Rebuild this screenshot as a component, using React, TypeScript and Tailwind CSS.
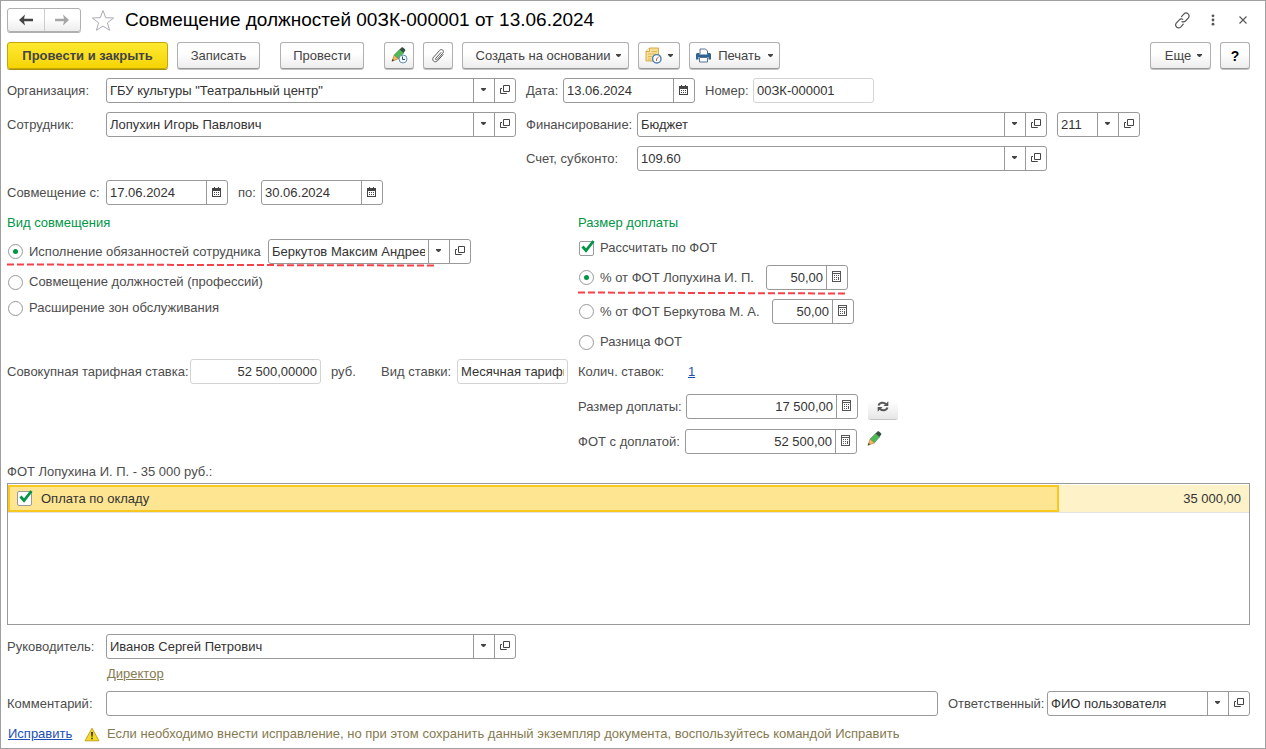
import { useState, type ReactNode } from 'react'
import clsx from 'clsx'

/* ---------- icons ---------- */

const CaretIcon = () => (
  <svg width="5" height="3" viewBox="0 0 5 3" className="shrink-0">
    <path d="M0 0h5v1L3 3H2L0 1z" fill="#444" />
  </svg>
)

const OpenIcon = () => (
  <svg width="10" height="10" viewBox="0 0 10 10" fill="none" stroke="#444">
    <path d="M3.500.5h6v6h-6z" />
    <path d="M2 3.500H.5v5h6V8" />
  </svg>
)

const CalendarIcon = () => (
  <svg width="9" height="10" viewBox="0 0 9 10">
    <path d="M0 1h9v9H0z" fill="#444" />
    <path d="M1 4h7v5H1z" fill="#fff" />
    <path d="M2 0h1v2H2zM6 0h1v2H6z" fill="#444" />
    <path d="M2 5h1v1H2zM4 5h1v1H4zM6 5h1v1H6zM2 7h1v1H2zM4 7h1v1H4zM6 7h1v1H6z" fill="#444" />
  </svg>
)

const CalcIcon = () => (
  <svg width="9" height="11" viewBox="0 0 9 11">
    <path d="M0 0h9v11H0z" fill="#555" />
    <path d="M1 1h7v1H1zM1 3h7v7H1z" fill="#fff" />
    <path d="M2 4h1v1H2zM4 4h1v1H4zM6 4h1v1H6zM2 6h1v1H2zM4 6h1v1H4zM6 6h1v3H6zM2 8h1v1H2zM4 8h1v1H4z" fill="#555" />
  </svg>
)

const ArrowIcon = ({ color, flip }: { color: string; flip?: boolean }) => (
  <svg width="14" height="12" viewBox="0 0 14 12" className={clsx(flip && 'rotate-180')}>
    <path d="M6 .5 0 6l6 5.500L5 7.200h9V4.800H5z" fill={color} />
  </svg>
)

const StarIcon = () => (
  <svg width="24" height="23" viewBox="0 0 24 23" fill="#fff" stroke="#a9adb5">
    <path d="M12 1.500l2.700 7.200 8 .3-6.300 4.800 2.200 7.500L12 17l-6.600 4.300 2.200-7.500L1.300 9l8-.3z" />
  </svg>
)

const LinkIcon = () => (
  <svg width="17" height="17" viewBox="0 0 17 17" fill="none" stroke="#555" strokeWidth="1.200" strokeLinecap="round">
    <path d="M7.500 4.600l2.300-2.500c1.300-1.300 3.100-1.300 4.300-.2 1.200 1.200 1.200 2.900.1 4.200L11.500 9c-1 1-2.300 1.200-3.500.6" />
    <path d="M9.300 12.200l-2.400 2.600c-1.300 1.300-3.100 1.300-4.300.2-1.200-1.200-1.200-2.900-.1-4.200l2.800-2.900c.9-1 2.200-1.200 3.400-.6" />
  </svg>
)

const DotsIcon = () => (
  <svg width="4" height="12" viewBox="0 0 4 12" fill="#555">
    <circle cx="2" cy="1.800" r="1.400" />
    <circle cx="2" cy="6" r="1.400" />
    <circle cx="2" cy="10.200" r="1.400" />
  </svg>
)

const CloseIcon = () => (
  <svg width="8" height="8" viewBox="0 0 8 8" stroke="#555" strokeWidth="1.100">
    <path d="M.5.500l7 7M7.500.500l-7 7" />
  </svg>
)

const Pencil = () => (
  <g>
    <path d="M8.500 2.500l4 3.600-5.200 5.800-4.300-3.800z" fill="#4fb858" stroke="#3a8a44" strokeWidth=".5" />
    <path d="M8.500 2.500l2-2c.5-.4 1-.4 1.500 0l2 1.800c.5.500.5 1 .1 1.500l-1.600 2.300z" fill="#35503f" />
    <path d="M3 8.100l4.300 3.800L1 14.300z" fill="#f5b566" stroke="#a8702c" strokeWidth=".5" />
    <path d="M1.700 12l1.500 1.300-2.500 1.200z" fill="#333" />
  </g>
)

const PencilIcon = () => (
  <svg width="15" height="15" viewBox="0 0 15 15"><Pencil /></svg>
)

const PencilClockIcon = () => (
  <svg width="17" height="17" viewBox="0 0 17 17">
    <Pencil />
    <circle cx="12" cy="12" r="4" fill="#f2f8ff" stroke="#6b8fae" />
    <path d="M11.500 9.500v3h2.500" fill="none" stroke="#2b4c6b" />
  </svg>
)

const ClipIcon = () => (
  <svg width="14" height="15" viewBox="0 0 14 15" fill="none" stroke="#5a5a5a" strokeLinecap="round">
    <path d="M10 4.500l-5.200 5.700c-.8 1 .5 2.200 1.400 1.200l5.600-6.200c1.900-2.200-1-5-3.100-2.800L2.500 9.200c-2.400 2.800 1.200 6.400 4 3.600l5.600-6.200" />
  </svg>
)

const NoteClockIcon = () => (
  <svg width="17" height="17" viewBox="0 0 17 17">
    <path d="M4.500 1h9v13H1V4.500z" fill="#f9df95" stroke="#d3ab4c" />
    <path d="M4.500 1v3.500H1" fill="#fff4cf" stroke="#d3ab4c" />
    <path d="M6.500 4.500H12M3 7h8M3 9.500h4M3 12h3" stroke="#dcb65c" />
    <circle cx="11.800" cy="11.800" r="4.200" fill="#fff" stroke="#4c7fae" strokeWidth="1.400" />
    <path d="M11.500 12l2.500-2.500M11.500 12v2" stroke="#d4554c" />
  </svg>
)

const PrinterIcon = () => (
  <svg width="15" height="15" viewBox="0 0 15 15">
    <path d="M4 6V1h5.500L11.500 3v3" fill="#fff" stroke="#56748f" />
    <path d="M1.500 5h2v1.500h8V5h2c.8 0 1.500.7 1.500 1.500v5h-2.500V9h-10v2.500H0v-5C0 5.700.7 5 1.500 5z" fill="#2f6490" />
    <path d="M3.500 9.500h8v4.500h-8z" fill="#fff" stroke="#56748f" />
  </svg>
)

const RefreshIcon = () => (
  <svg width="12" height="11" viewBox="0 0 12 11" fill="none" stroke="#555" strokeWidth="2">
    <path d="M1.500 4.500C2.200 1.600 6.500.8 8.800 3" />
    <path d="M10.500 6.500C9.800 9.400 5.500 10.200 3.200 8" />
    <path d="M11.300.2v4.800H6.500z" fill="#555" stroke="none" />
    <path d="M.7 10.800V6h4.800z" fill="#555" stroke="none" />
  </svg>
)

const WarningIcon = () => (
  <svg width="16" height="15" viewBox="0 0 16 15">
    <path d="M8 1.200l7 12.600H1z" fill="#f5d925" stroke="#c7a51b" strokeLinejoin="round" />
    <path d="M7 5h2l-.4 4.800H7.400zM7.200 10.700h1.600v1.600H7.200z" fill="#333" />
  </svg>
)

/* ---------- controls ---------- */

const btnBase =
  'flex h-[27px] items-center justify-center rounded-[3px] border border-[#b0b0b0] border-b-[#979797] bg-linear-to-b from-white from-40% to-[#ededed] text-[#444] shadow-[0_1px_0_#c4c4c4]'

function Button({ className, label, children }: { className?: string; label?: string; children: ReactNode }) {
  return (
    <button type="button" aria-label={label} className={clsx(btnBase, className)}>
      {children}
    </button>
  )
}

type Addon = 'list' | 'open' | 'calendar' | 'calc'

const addonIcons: Record<Addon, ReactNode> = {
  list: <CaretIcon />,
  open: <OpenIcon />,
  calendar: <CalendarIcon />,
  calc: <CalcIcon />,
}

const addonLabels: Record<Addon, string> = {
  list: 'Выбрать из списка',
  open: 'Открыть',
  calendar: 'Календарь',
  calc: 'Калькулятор',
}

interface FieldProps {
  id: string
  value?: string
  className: string
  addons?: Addon[]
  right?: boolean
  readOnly?: boolean
  label?: string
}

function Field({ id, value = '', className, addons = [], right, readOnly, label }: FieldProps) {
  return (
    <div
      className={clsx(
        'flex h-[25px] rounded-[3px] border bg-white',
        readOnly ? 'border-[#d4d4d4]' : 'border-[#999]',
        className,
      )}
    >
      <input
        id={id}
        type="text"
        defaultValue={value}
        readOnly={readOnly}
        aria-label={label}
        className={clsx('min-w-0 flex-1 bg-transparent px-[3px] text-[#333] outline-none', right && 'text-right')}
      />
      {addons.map(a => (
        <button
          key={a}
          type="button"
          aria-label={addonLabels[a]}
          className="flex w-[21px] shrink-0 items-center justify-center border-l border-[#999] pr-px pb-0.5"
        >
          {addonIcons[a]}
        </button>
      ))}
    </div>
  )
}

function Label({ htmlFor, className, children }: { htmlFor: string; className?: string; children: ReactNode }) {
  return (
    <label htmlFor={htmlFor} className={clsx('shrink-0 whitespace-nowrap', className)}>
      {children}
    </label>
  )
}

interface RadioProps {
  name: string
  checked: boolean
  onChange: () => void
  className?: string
  children: ReactNode
}

function Radio({ name, checked, onChange, className, children }: RadioProps) {
  return (
    <label className={clsx('flex shrink-0 items-center gap-1.5 pl-px whitespace-nowrap', className)}>
      <span className="grid size-[15px] place-items-center">
        <input
          type="radio"
          name={name}
          checked={checked}
          onChange={onChange}
          className="col-start-1 row-start-1 size-[15px] appearance-none rounded-full border border-[#999] bg-white"
        />
        {checked && <span className="pointer-events-none col-start-1 row-start-1 size-[5px] rounded-full bg-[#009646]" />}
      </span>
      {children}
    </label>
  )
}

function Checkbox({ className, children }: { className: string; children: ReactNode }) {
  const [on, setOn] = useState(true)
  return (
    <label className={clsx('flex items-center whitespace-nowrap', className)}>
      <span className="relative size-[15px]">
        <input
          type="checkbox"
          checked={on}
          onChange={() => setOn(!on)}
          className="block size-[15px] appearance-none rounded-[2px] border border-[#999] bg-white"
        />
        {on && (
          <svg width="14" height="13" viewBox="0 0 14 13" className="pointer-events-none absolute -top-px left-0.5">
            <path d="M1.500 6.500l3.500 4L12.500 1" fill="none" stroke="#009646" strokeWidth="2.800" />
          </svg>
        )}
      </span>
      {children}
    </label>
  )
}

function RedMark({ className, slope }: { className: string; slope: number }) {
  return (
    <svg height="4" className={clsx('pointer-events-none absolute left-0', className)}>
      <line x1="0" y1="1.500" x2="100%" y2={1.5 + slope} stroke="#f5414a" strokeWidth="2" strokeDasharray="7 3" />
    </svg>
  )
}

/* ---------- page ---------- */

const combineKinds = ['Совмещение должностей (профессий)', 'Расширение зон обслуживания']

export default function App() {
  const [kind, setKind] = useState(0)
  const [calc, setCalc] = useState(0)

  return (
    <main className="min-h-screen border border-[#a0a0a0] bg-white pr-[15px] pb-1 pl-1.5 font-['Liberation_Sans',Arial,sans-serif] text-[13px] leading-4 text-[#4d4d4d]">
      {/* Title */}
      <header className="flex items-center pt-[7px]">
        <div className="flex h-6 w-[74px] shrink-0 rounded-[3px] border border-[#b0b0b0] bg-linear-to-b from-white from-40% to-[#ededed] shadow-[0_1px_0_#b0b0b0]">
          <button type="button" aria-label="Назад" className="flex flex-1 items-center justify-center">
            <ArrowIcon color="#444" />
          </button>
          <button type="button" aria-label="Вперед" className="flex flex-1 items-center justify-center border-l border-[#ccc]">
            <ArrowIcon color="#a6a6a6" flip />
          </button>
        </div>
        <button type="button" aria-label="Добавить в избранное" className="ml-2.5">
          <StarIcon />
        </button>
        <h1 className="ml-2.5 text-[19px] leading-6 text-black">Совмещение должностей 00ЗК-000001 от 13.06.2024</h1>
        <div className="mr-[3px] ml-auto flex items-center gap-5">
          <button type="button" aria-label="Получить ссылку"><LinkIcon /></button>
          <button type="button" aria-label="Меню"><DotsIcon /></button>
          <button type="button" aria-label="Закрыть" className="ml-1"><CloseIcon /></button>
        </div>
      </header>

      {/* Command bar */}
      <div className="mt-2.5 flex items-center gap-[9px]">
        <button
          type="button"
          className="flex h-[27px] w-[161px] items-center justify-center rounded-[3px] border border-[#c2a60c] bg-linear-to-b from-[#ffe92e] to-[#f5d400] font-bold text-[#444] shadow-[0_1px_0_#a8900c]"
        >
          Провести и закрыть
        </button>
        <Button className="w-[83px]">Записать</Button>
        <Button className="mx-[11px] w-[84px]">Провести</Button>
        <Button className="w-[30px]" label="Отложить"><PencilClockIcon /></Button>
        <Button className="w-[30px]" label="Файлы"><ClipIcon /></Button>
        <Button className="w-[167px] gap-1.5 pl-1.5">Создать на основании <CaretIcon /></Button>
        <Button className="w-[42px] gap-1.5" label="Напоминания"><NoteClockIcon /> <CaretIcon /></Button>
        <Button className="w-[91px] gap-[7px]"><PrinterIcon /> Печать <CaretIcon /></Button>
        <Button className="ml-auto w-[61px] gap-1.5 pl-1.5">Еще <CaretIcon /></Button>
        <Button className="w-[30px] text-sm font-bold text-black" label="Справка">?</Button>
      </div>

      {/* Document header */}
      <section className="mt-[9px] flex flex-col gap-[9px]">
        <div className="flex items-center">
          <Label htmlFor="org" className="w-[99px]">Организация:</Label>
          <Field id="org" className="w-[410px]" value={'ГБУ культуры "Театральный центр"'} addons={['list', 'open']} />
          <Label htmlFor="date" className="ml-2.5 w-[37px]">Дата:</Label>
          <Field id="date" className="w-[132px]" value="13.06.2024" addons={['calendar']} />
          <Label htmlFor="number" className="ml-2.5 w-12">Номер:</Label>
          <Field id="number" className="w-[121px]" value="00ЗК-000001" readOnly />
        </div>
        <div className="flex items-center">
          <Label htmlFor="employee" className="w-[99px]">Сотрудник:</Label>
          <Field id="employee" className="w-[410px]" value="Лопухин Игорь Павлович" addons={['list', 'open']} />
          <Label htmlFor="finance" className="ml-2.5 w-[111px]">Финансирование:</Label>
          <Field id="finance" className="w-[410px]" value="Бюджет" addons={['list', 'open']} />
          <Field id="kosgu" className="ml-2.5 w-[83px]" value="211" addons={['list', 'open']} label="КОСГУ" />
        </div>
        <div className="flex items-center pl-[519px]">
          <Label htmlFor="account" className="w-[111px]">Счет, субконто:</Label>
          <Field id="account" className="w-[410px]" value="109.60" addons={['list', 'open']} />
        </div>
        <div className="flex items-center">
          <Label htmlFor="from" className="w-[99px]">Совмещение с:</Label>
          <Field id="from" className="w-[122px]" value="17.06.2024" addons={['calendar']} />
          <Label htmlFor="to" className="ml-2.5 w-[23px]">по:</Label>
          <Field id="to" className="w-[122px]" value="30.06.2024" addons={['calendar']} />
        </div>
      </section>

      <div className="mt-2.5 flex">
        {/* Kind of combination */}
        <fieldset className="w-[571px] shrink-0">
          <legend className="text-[#009646]">Вид совмещения</legend>
          <div className="relative mt-2 flex items-center">
            <Radio name="kind" checked={kind === 0} onChange={() => setKind(0)} className="w-[261px]">
              Исполнение обязанностей сотрудника
            </Radio>
            <Field id="substitute" className="w-[203px]" value="Беркутов Максим Андреевич" addons={['list', 'open']} label="Сотрудник" />
            <RedMark className="top-6 w-[428px]" slope={1} />
          </div>
          <div className="mt-2.5 flex flex-col gap-2.5">
            {combineKinds.map((text, i) => (
              <Radio key={text} name="kind" checked={kind === i + 1} onChange={() => setKind(i + 1)}>
                {text}
              </Radio>
            ))}
          </div>
        </fieldset>

        {/* Extra pay calculation */}
        <fieldset>
          <legend className="text-[#009646]">Размер доплаты</legend>
          <div className="mt-[9px]">
            <Checkbox className="gap-1.5 pl-px">Рассчитать по ФОТ</Checkbox>
          </div>
          <div className="relative mt-[9px] flex items-center">
            <Radio name="calc" checked={calc === 0} onChange={() => setCalc(0)} className="w-[188px]">
              % от ФОТ Лопухина И. П.
            </Radio>
            <Field id="percent1" className="w-[82px]" value="50,00" addons={['calc']} right label="Процент" />
            <RedMark className="top-[26px] w-[268px]" slope={1} />
          </div>
          <div className="mt-[9px] flex items-center">
            <Radio name="calc" checked={calc === 1} onChange={() => setCalc(1)} className="w-[194px]">
              % от ФОТ Беркутова М. А.
            </Radio>
            <Field id="percent2" className="w-[82px]" value="50,00" addons={['calc']} right label="Процент" />
          </div>
          <Radio name="calc" checked={calc === 2} onChange={() => setCalc(2)} className="mt-2.5">
            Разница ФОТ
          </Radio>
        </fieldset>
      </div>

      {/* Rates and amounts */}
      <section className="mt-[9px] flex flex-col gap-2.5">
        <div className="flex items-center">
          <Label htmlFor="rate" className="w-[183px]">Совокупная тарифная ставка:</Label>
          <Field id="rate" className="w-[131px]" value="52 500,00000" right readOnly />
          <span className="ml-2.5 w-[50px]">руб.</span>
          <Label htmlFor="rateKind" className="w-[76px]">Вид ставки:</Label>
          <Field id="rateKind" className="w-[111px]" value="Месячная тарифная ставка" readOnly />
          <span className="ml-2.5 w-[110px]">Колич. ставок:</span>
          <a href="#" className="text-[#1a4fb5] underline">1</a>
        </div>
        <div className="flex items-center pl-[571px]">
          <Label htmlFor="extra" className="w-[108px]">Размер доплаты:</Label>
          <Field id="extra" className="w-[172px]" value="17 500,00" addons={['calc']} right />
          <button
            type="button"
            aria-label="Пересчитать"
            className="ml-2.5 flex h-[25px] w-[30px] items-center justify-center rounded-[3px] bg-linear-to-b from-white from-30% to-[#e6e6e6] shadow-[0_1px_0_#c4c4c4]"
          >
            <RefreshIcon />
          </button>
        </div>
        <div className="flex items-center pl-[571px]">
          <Label htmlFor="total" className="w-[107px]">ФОТ с доплатой:</Label>
          <Field id="total" className="w-[172px]" value="52 500,00" addons={['calc']} right />
          <button type="button" aria-label="Изменить" className="ml-2.5 pb-1.5"><PencilIcon /></button>
        </div>
      </section>

      {/* Accruals */}
      <section className="mt-2.5">
        <h2>ФОТ Лопухина И. П. - 35 000 руб.:</h2>
        <div className="mt-[3px] h-[142px] border border-[#999] pt-px">
          <table className="w-full table-fixed border-collapse text-[#333]">
            <colgroup>
              <col />
              <col className="w-[190px]" />
            </colgroup>
            <tbody>
              <tr className="border-b border-[#e2e2e2]">
                <td className="p-0">
                  <div className="flex h-[27px] items-center border-2 border-[#f9c81e] bg-[#fee591] pl-[7px]">
                    <Checkbox className="gap-[9px]">Оплата по окладу</Checkbox>
                  </div>
                </td>
                <td className="bg-[#fdf2c8] p-0 pr-2 text-right">35 000,00</td>
              </tr>
            </tbody>
          </table>
        </div>
      </section>

      {/* Signature and comment */}
      <section className="mt-[9px]">
        <div className="flex items-center">
          <Label htmlFor="head" className="w-[99px]">Руководитель:</Label>
          <Field id="head" className="w-[410px]" value="Иванов Сергей Петрович" addons={['list', 'open']} />
        </div>
        <div className="mt-[7px] pl-[100px]">
          <a href="#" className="text-[#857a50] underline">Директор</a>
        </div>
        <div className="mt-[9px] flex items-center">
          <Label htmlFor="comment" className="w-[99px]">Комментарий:</Label>
          <Field id="comment" className="flex-1" />
          <Label htmlFor="author" className="ml-2.5 w-[99px]">Ответственный:</Label>
          <Field id="author" className="w-[203px]" value="ФИО пользователя" addons={['list', 'open']} />
        </div>
      </section>

      <footer className="mt-2.5 flex items-center pl-px text-[#857a50]">
        <a href="#" className="w-[76px] text-[#1a4fb5] underline">Исправить</a>
        <WarningIcon />
        <p className="ml-[7px]">
          Если необходимо внести исправление, но при этом сохранить данный экземпляр документа, воспользуйтесь командой Исправить
        </p>
      </footer>
    </main>
  )
}
